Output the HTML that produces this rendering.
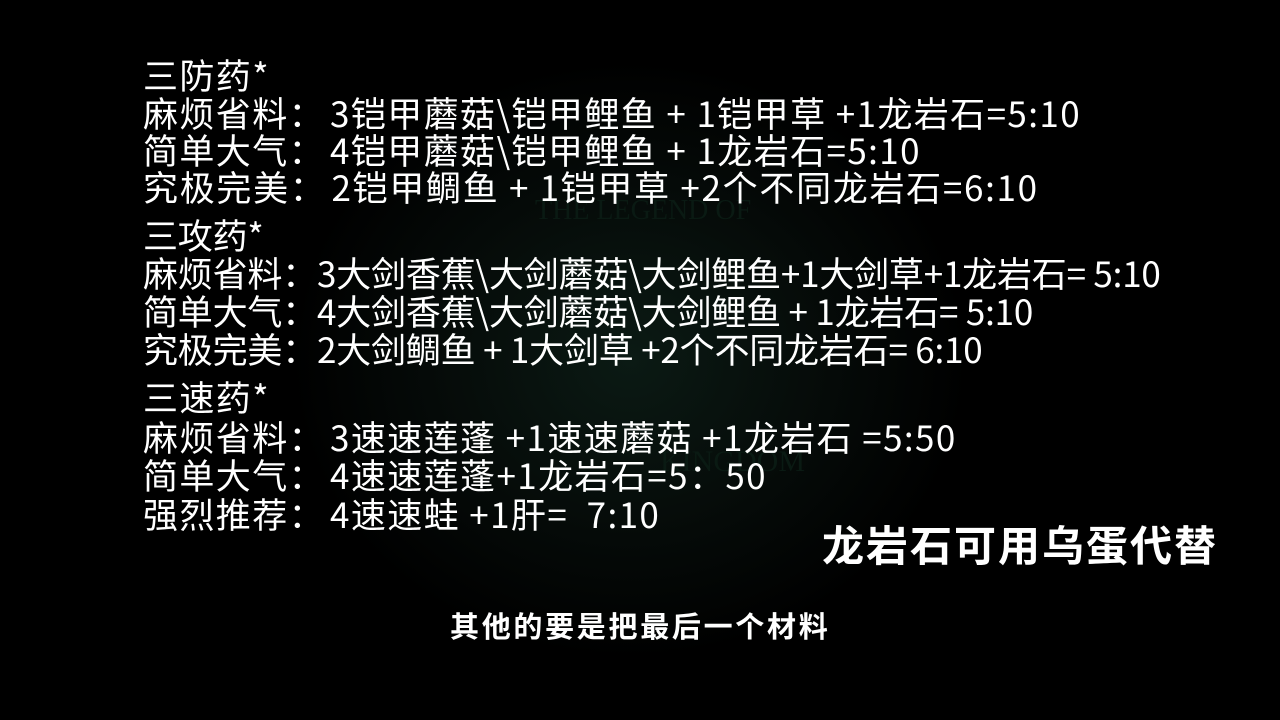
<!DOCTYPE html>
<html><head><meta charset="utf-8"><style>
html,body{margin:0;padding:0;background:#000;}
body{width:1280px;height:720px;position:relative;overflow:hidden;background:radial-gradient(ellipse 340px 300px at 630px 360px,#0b1a14 0%,#050a08 60%,#000 100%);}
.l{position:absolute;left:143px;color:#fff;font-family:"Noto Sans CJK SC","Liberation Sans",sans-serif;font-size:35px;line-height:36px;white-space:pre;letter-spacing:1.4px;}
.l.c{letter-spacing:-0.2px;}
.l i{font-style:normal;margin-left:5px;}
.big{position:absolute;color:#fff;font-family:"Noto Sans CJK SC",sans-serif;font-weight:bold;white-space:pre;}
.logo{position:absolute;color:#0a1a13;font-family:"Liberation Serif",serif;white-space:pre;}
</style></head><body>
<div class="logo" style="left:535px;top:195px;font-size:28px;">THE LEGEND OF</div>
<div class="logo" style="left:660px;top:445px;font-size:30px;">KINGDOM</div>
<div class="l" style="top:57px">三防药*</div>
<div class="l" style="top:95px">麻烦省料：<i>3</i>铠甲蘑菇\铠甲鲤鱼 + 1铠甲草 +1龙岩石=5:10</div>
<div class="l" style="top:132px">简单大气：<i>4</i>铠甲蘑菇\铠甲鲤鱼 + 1龙岩石=5:10</div>
<div class="l" style="top:169px;letter-spacing:1.7px">究极完美：<i>2</i>铠甲鲷鱼 + 1铠甲草 +2个不同龙岩石=6:10</div>
<div class="l c" style="top:217px">三攻药*</div>
<div class="l c" style="top:255px">麻烦省料：3大剑香蕉\大剑蘑菇\大剑鲤鱼+1大剑草+1龙岩石= 5:10</div>
<div class="l c" style="top:293px">简单大气：4大剑香蕉\大剑蘑菇\大剑鲤鱼 + 1龙岩石= 5:10</div>
<div class="l c" style="top:331px">究极完美：2大剑鲷鱼 + 1大剑草 +2个不同龙岩石= 6:10</div>
<div class="l" style="top:379px">三速药*</div>
<div class="l" style="top:419px">麻烦省料：<i>3</i>速速莲蓬 +1速速蘑菇 +1龙岩石 =5:50</div>
<div class="l" style="top:457px">简单大气：<i>4</i>速速莲蓬+1龙岩石=5：50</div>
<div class="l" style="top:496px">强烈推荐：<i>4</i>速速蛙 +1肝=  7:10</div>
<div class="big" style="left:822px;top:518px;font-size:42px;line-height:52px;letter-spacing:2px;">龙岩石可用乌蛋代替</div>
<div class="big" style="left:450px;top:606px;font-size:29px;line-height:38px;letter-spacing:2.7px;">其他的要是把最后一个材料</div>
</body></html>
